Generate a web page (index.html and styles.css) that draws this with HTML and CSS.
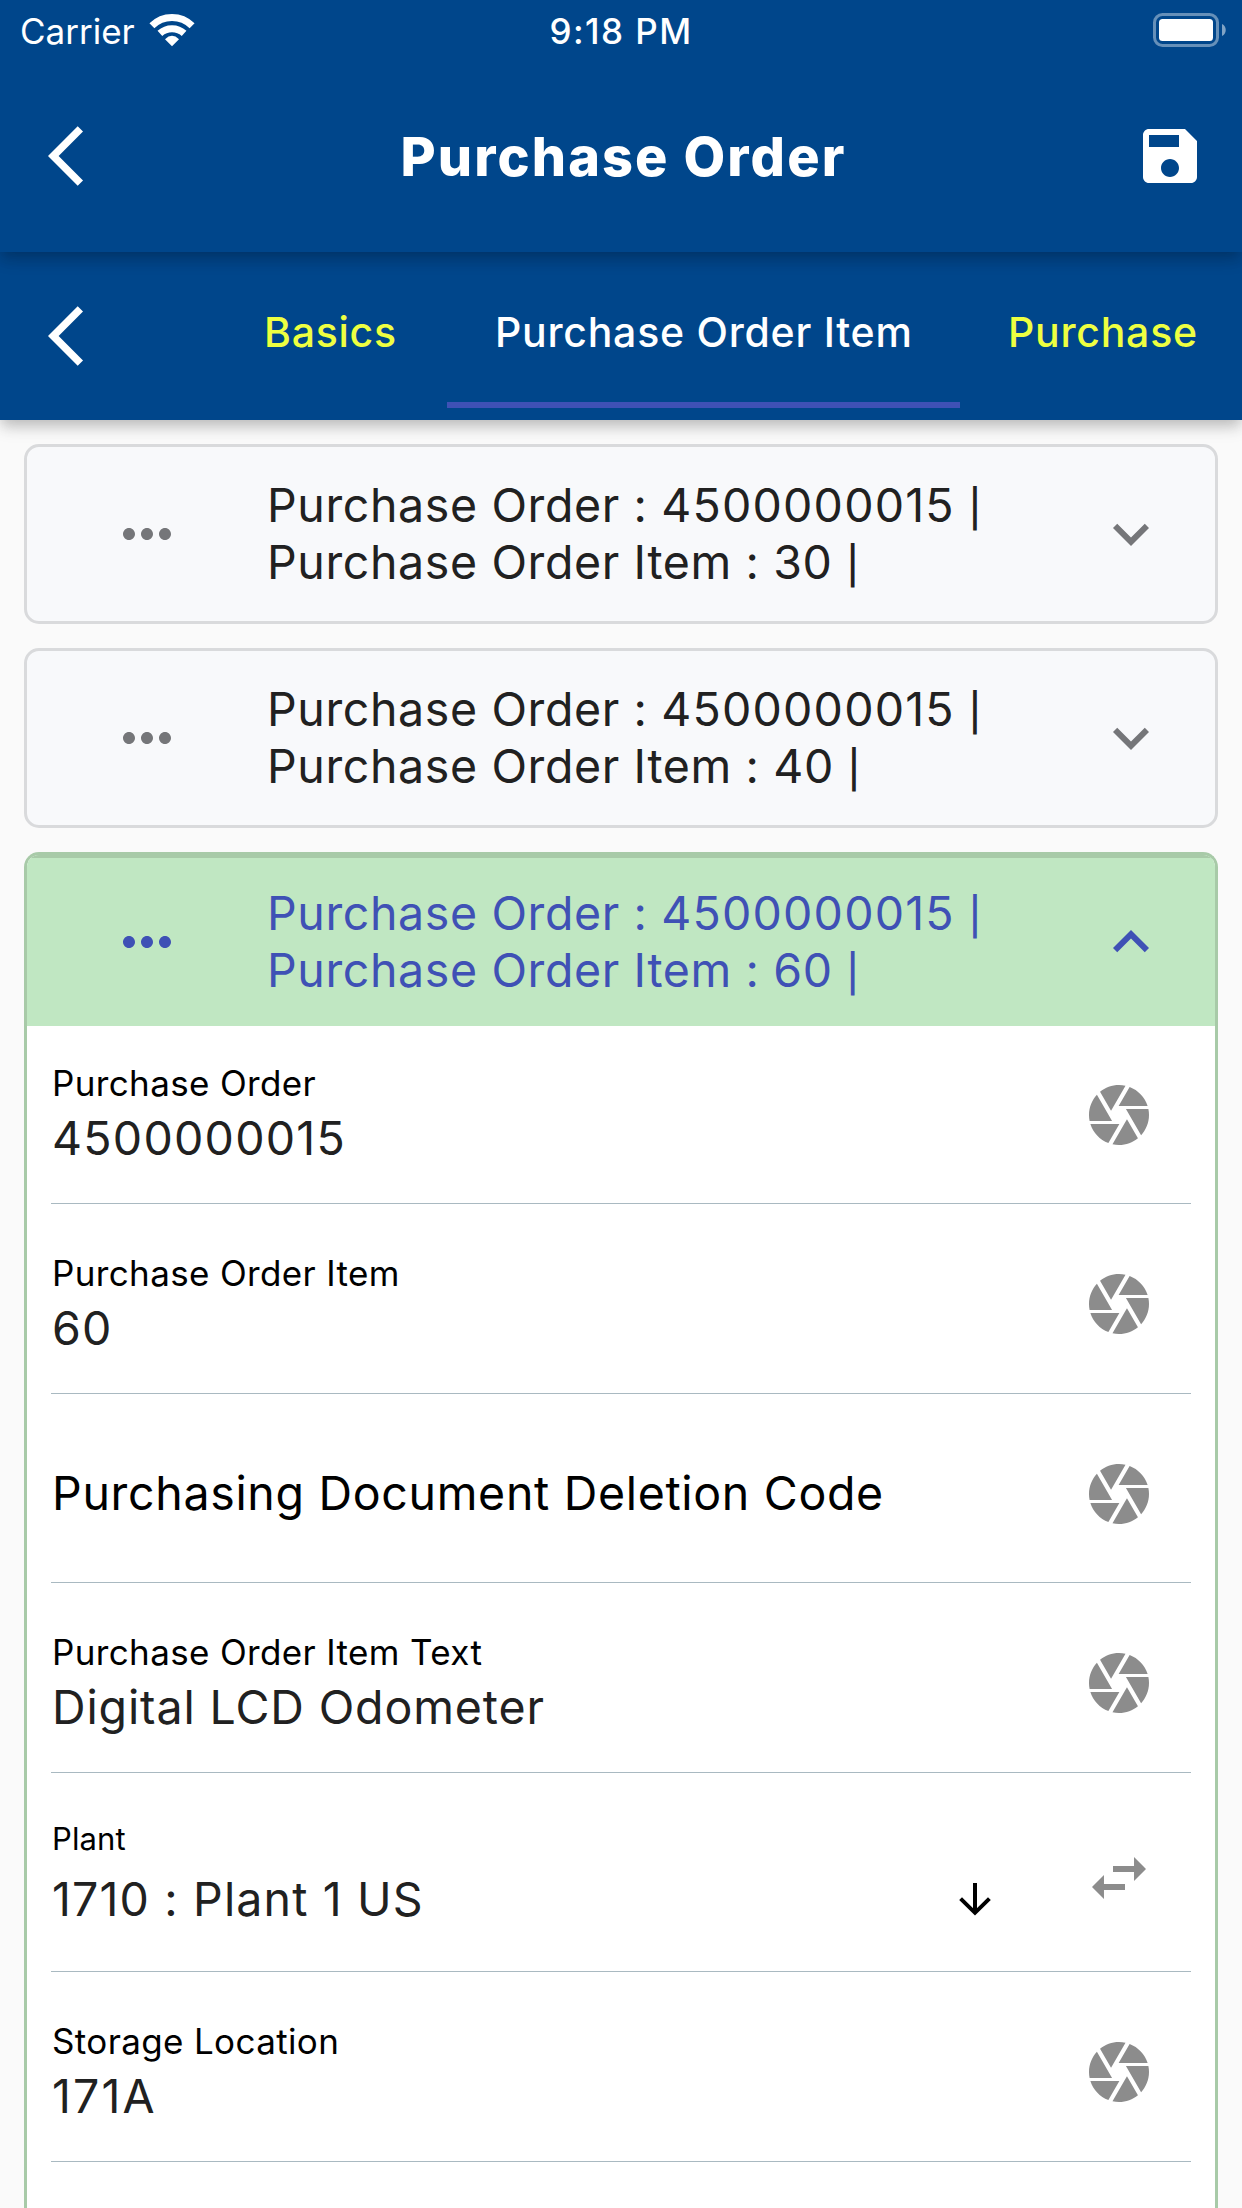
FILE: index.html
```html
<!DOCTYPE html>
<html lang="en">
<head>
<meta charset="utf-8">
<title>Purchase Order</title>
<link rel="stylesheet" href="styles.css">
</head>
<body>
<svg class="defs" aria-hidden="true">
  <symbol id="back" viewBox="0 0 24 24"><path d="M11.67 3.87L9.9 2.1 0 12l9.9 9.9 1.77-1.77L3.54 12z"/></symbol>
  <symbol id="save" viewBox="0 0 24 24"><path d="M17 3H5c-1.11 0-2 .9-2 2v14c0 1.1.89 2 2 2h14c1.1 0 2-.9 2-2V7l-4-4zm-5 16c-1.66 0-3-1.34-3-3s1.34-3 3-3 3 1.34 3 3-1.34 3-3 3zm3-10H5V5h10v4z"/></symbol>
  <symbol id="more" viewBox="0 0 24 24"><path d="M6 10c-1.1 0-2 .9-2 2s.9 2 2 2 2-.9 2-2-.9-2-2-2zm12 0c-1.1 0-2 .9-2 2s.9 2 2 2 2-.9 2-2-.9-2-2-2zm-6 0c-1.1 0-2 .9-2 2s.9 2 2 2 2-.9 2-2-.9-2-2-2z"/></symbol>
  <symbol id="expand" viewBox="0 0 24 24"><path d="M16.59 8.59L12 13.17 7.41 8.59 6 10l6 6 6-6z"/></symbol>
  <symbol id="camera" viewBox="0 0 24 24"><path d="M9.4 10.5l4.77-8.26C13.47 2.09 12.75 2 12 2c-2.4 0-4.6.85-6.32 2.25l3.66 6.35.06-.1zM21.54 9c-.92-2.92-3.15-5.26-6-6.34L11.88 9h9.66zm.26 1h-7.49l.29.5 4.76 8.25C20.97 16.97 22 14.61 22 12c0-.69-.07-1.35-.2-2zM8.54 12l-3.9-6.75C3.01 7.03 2 9.39 2 12c0 .69.07 1.35.2 2h7.49l-1.15-2zm-6.08 3c.92 2.92 3.15 5.26 6 6.34L12.12 15H2.46zm11.27 0l-3.9 6.76c.7.15 1.42.24 2.17.24 2.4 0 4.6-.85 6.32-2.25l-3.66-6.35-.93 1.6z"/></symbol>
  <symbol id="swap" viewBox="0 0 24 24"><path d="M6.99 11L3 15l3.99 4v-3H14v-2H6.99v-3zM21 9l-3.99-4v3H10v2h7.01v3L21 9z"/></symbol>
</svg>

<header class="appbar">
  <div class="status">
    <div class="status-left">
      <span class="carrier">Carrier</span>
      <svg class="wifi" viewBox="0 0 46 34">
        <path class="wave" d="M2.9 12.7A28.5 28.5 0 0 1 43.1 12.7"/>
        <path class="wave" d="M10.9 20.4A18 18 0 0 1 35.1 20.4"/>
        <path class="dot" d="M23 33.2L16 26.2Q23 19.4 30 26.2Z"/>
      </svg>
    </div>
    <span class="time">9:18 PM</span>
    <svg class="battery" viewBox="0 0 74 34">
      <rect class="shell" x="1.5" y="1.5" width="63" height="31" rx="8"/>
      <rect class="charge" x="6" y="6" width="54" height="22" rx="3.5"/>
      <path class="nub" d="M69 11C74 13 74 21 69 23Z"/>
    </svg>
  </div>
  <div class="titlebar">
    <svg class="icon"><use href="#back"/></svg>
    <h1 class="title">Purchase Order</h1>
    <svg class="icon"><use href="#save"/></svg>
  </div>
</header>

<nav class="tabbar">
  <svg class="icon"><use href="#back"/></svg>
  <div class="tabs">
    <a class="tab tab-basics">Basics</a>
    <a class="tab tab-item active">Purchase Order Item</a>
    <a class="tab">Purchase</a>
  </div>
</nav>

<main class="list">
  <section class="card">
    <div class="card-head">
      <svg class="icon"><use href="#more"/></svg>
      <div class="card-title">Purchase Order : <span class="num">4500000015</span> <span class="bar">|</span><br>Purchase Order Item : 30 <span class="bar">|</span></div>
      <svg class="icon"><use href="#expand"/></svg>
    </div>
  </section>
  <section class="card">
    <div class="card-head">
      <svg class="icon"><use href="#more"/></svg>
      <div class="card-title">Purchase Order : <span class="num">4500000015</span> <span class="bar">|</span><br>Purchase Order Item : 40 <span class="bar">|</span></div>
      <svg class="icon"><use href="#expand"/></svg>
    </div>
  </section>
  <section class="card open">
    <div class="card-head">
      <svg class="icon"><use href="#more"/></svg>
      <div class="card-title">Purchase Order : <span class="num">4500000015</span> <span class="bar">|</span><br>Purchase Order Item : 60 <span class="bar">|</span></div>
      <svg class="icon flip"><use href="#expand"/></svg>
    </div>
    <div class="fields">
      <div class="field">
        <div class="text"><div class="label">Purchase Order</div><div class="value digits">4500000015</div></div>
        <svg class="icon"><use href="#camera"/></svg>
      </div>
      <div class="field raised">
        <div class="text"><div class="label">Purchase Order Item</div><div class="value digits">60</div></div>
        <svg class="icon"><use href="#camera"/></svg>
      </div>
      <div class="field short">
        <div class="text empty">Purchasing Document Deletion Code</div>
        <svg class="icon"><use href="#camera"/></svg>
      </div>
      <div class="field raised">
        <div class="text"><div class="label">Purchase Order Item Text</div><div class="value">Digital LCD Odometer</div></div>
        <svg class="icon"><use href="#camera"/></svg>
      </div>
      <div class="field select">
        <div class="text">
          <div class="label small">Plant</div>
          <div class="value plant">1710 : Plant 1 US
            <svg class="down" viewBox="0 0 36 36"><path d="M18 2V31M3.6 17.6L18 31.8 32.4 17.6"/></svg>
          </div>
        </div>
        <svg class="icon"><use href="#swap"/></svg>
      </div>
      <div class="field raised">
        <div class="text"><div class="label">Storage Location</div><div class="value code">171A</div></div>
        <svg class="icon"><use href="#camera"/></svg>
      </div>
    </div>
  </section>
</main>
</body>
</html>
```
FILE: styles.css
```css
* { box-sizing: border-box; }

body {
  margin: 0;
  height: 2208px;
  overflow: hidden;
  display: flex;
  flex-direction: column;
  background: #fafafa;
  color: #212121;
  font-family: Inter, "Liberation Sans", sans-serif;
}

.defs { display: none; }

.icon {
  flex: none;
  width: 72px;
  height: 72px;
  fill: currentColor;
}

.appbar,
.tabbar {
  position: relative;
  flex: none;
  background: #00468b;
  color: #fff;
  box-shadow: 0 6px 12px -3px rgba(0, 0, 0, .14), 0 9px 15px 0 rgba(0, 0, 0, .11), 0 3px 20px 0 rgba(0, 0, 0, .06);
}

.appbar { z-index: 2; height: 252px; }
.tabbar { z-index: 1; height: 168px; }

/* Status bar */
.status {
  display: grid;
  grid-template-columns: 1fr auto 1fr;
  height: 60px;
  padding: 0 15px;
  font-size: 35px;
  line-height: 62px;
}

.status-left { display: flex; gap: 14px; padding-left: 5px; }
.wifi { width: 46px; height: 34px; margin-top: 12.5px; }
.wave { fill: none; stroke: #fff; stroke-width: 7; }
.dot { fill: #fff; }
.time { font-weight: 500; letter-spacing: 1.45px; }
.battery { width: 74px; height: 34px; margin-top: 13px; justify-self: end; }
.shell { fill: none; stroke: #fff; stroke-opacity: .4; stroke-width: 3; }
.charge { fill: #fff; }
.nub { fill: #fff; fill-opacity: .5; }

.titlebar {
  display: flex;
  align-items: center;
  justify-content: space-between;
  height: 192px;
  padding: 0 36px 0 48px;
}

.title {
  margin: 0;
  padding: 2px 7px 0 0;
  font-size: 54px;
  font-weight: 800;
  letter-spacing: 2.1px;
  line-height: 66px;
}

/* Tabs */
.tabbar {
  display: flex;
  align-items: center;
  padding: 0 24px 0 48px;
}

.tabs {
  display: flex;
  flex: 1;
  height: 168px;
  margin-left: 96px;
}

.tab {
  position: relative;
  flex: none;
  padding-left: 48px;
  color: #eeff41;
  font-size: 41px;
  font-weight: 500;
  letter-spacing: .75px;
  line-height: 160px;
}

.tab-basics { width: 231px; }
.tab-item { width: 513px; }
.active { color: #fff; }

.active::after {
  content: "";
  position: absolute;
  left: 0;
  right: 0;
  bottom: 12px;
  height: 6px;
  background: #3f51b5;
}

/* Purchase order items */
.list {
  display: flex;
  flex: 1;
  flex-direction: column;
  gap: 24px;
  min-height: 0;
  padding: 24px 24px 0;
}

.card {
  flex: none;
  border: 3px solid #d9dadc;
  border-radius: 15px;
  background: #f8f9fb;
  overflow: hidden;
}

.card-head {
  display: flex;
  align-items: center;
  height: 174px;
  padding: 0 48px 0 84px;
  color: #757679;
}

.card-title {
  flex: 1;
  margin-left: 84px;
  color: #212121;
  font-size: 46.5px;
  letter-spacing: .62px;
  line-height: 57px;
  white-space: nowrap;
}

.num { letter-spacing: 1.2px; }

.bar {
  font-size: .8em;
  font-weight: 500;
  line-height: 0;
}

.open {
  flex: 1;
  border-color: #a8caa8;
  border-bottom: 0;
  border-radius: 15px 15px 0 0;
  background: #fff;
}

.open .card-head {
  height: 171px;
  border-top: 3px solid #a8caa8;
  background: #c0e7c2;
  color: #3f51b5;
}

.open .card-title { color: #3f51b5; }
.flip { transform: rotate(180deg); }

/* Field rows */
.fields {
  display: flex;
  flex-direction: column;
  gap: 12px;
  padding: 0 24px;
}

.field {
  display: flex;
  align-items: center;
  height: 178px;
  padding-right: 36px;
  border-bottom: 1px solid #a9b9c1;
  color: #8c8c8c;
}

.raised { padding-bottom: 1px; }
.short { height: 177px; }
.select { height: 187px; }

.text { flex: 1; padding: 3px 0 0 1px; }

.label {
  color: #000;
  font-size: 35px;
  letter-spacing: .36px;
  line-height: 44px;
}

.value {
  display: flex;
  align-items: center;
  justify-content: space-between;
  color: #212121;
  font-size: 46.5px;
  letter-spacing: .88px;
  line-height: 66px;
}

.digits { letter-spacing: 1.25px; }
.plant { letter-spacing: 1.15px; }
.code { letter-spacing: 2.1px; }

.empty {
  padding: 0 0 2px 1px;
  color: #000;
  font-size: 46.5px;
  letter-spacing: .68px;
}

.select .text { padding: 0 90px 7px 1px; }
.small { margin-bottom: 5px; font-size: 31px; letter-spacing: .1px; }

.down {
  width: 36px;
  height: 36px;
  fill: none;
  stroke: #000;
  stroke-width: 4;
}
```
